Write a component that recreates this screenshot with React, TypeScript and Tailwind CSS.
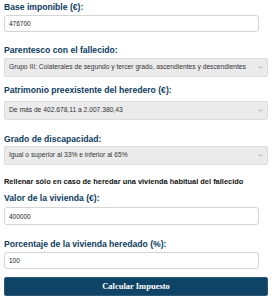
import { ChevronDown } from 'lucide-react';

const labelCls = 'block text-[8.6px] leading-[11px] font-bold text-[#0d3b5e]';
const inputCls =
  'block w-[255px] h-[17px] px-[4px] bg-white border border-[#d4d4d4] rounded-[3px] text-[6.5px] text-[#222] outline-none';

function Select({ value, options }: { value: string; options: string[] }) {
  return (
    <div className="relative w-[264px]">
      <select
        defaultValue={value}
        className="block w-full h-[19px] pl-[4px] pr-[14px] appearance-none bg-[#ebebeb] border border-[#dcdcdc] rounded-[2px] text-[6.7px] text-[#333] outline-none"
      >
        {options.map((o) => (
          <option key={o} value={o}>
            {o}
          </option>
        ))}
      </select>
      <ChevronDown className="absolute right-[5px] top-[7px] w-[5px] h-[5px] text-[#777] pointer-events-none" strokeWidth={3} />
    </div>
  );
}

export default function App() {
  return (
    <div className="w-[272px] h-[302px] bg-white px-[4px] pt-[2px] font-['Liberation_Sans',Arial,sans-serif] overflow-hidden">
      <label className={labelCls}>Base imponible (€):</label>
      <input className={`${inputCls} mt-[2px]`} defaultValue="476700" />

      <label className={`${labelCls} mt-[13px]`}>Parentesco con el fallecido:</label>
      <div className="mt-[2px]">
        <Select
          value="Grupo III: Colaterales de segundo y tercer grado, ascendientes y descendientes"
          options={['Grupo III: Colaterales de segundo y tercer grado, ascendientes y descendientes']}
        />
      </div>

      <label className={`${labelCls} mt-[8px]`}>Patrimonio preexistente del heredero (€):</label>
      <div className="mt-[5px]">
        <Select value="De más de 402.678,11 a 2.007.380,43" options={['De más de 402.678,11 a 2.007.380,43']} />
      </div>

      <label className={`${labelCls} mt-[14px]`}>Grado de discapacidad:</label>
      <div className="mt-[1px]">
        <Select
          value="Igual o superior al 33% e inferior al 65%"
          options={['Igual o superior al 33% e inferior al 65%']}
        />
      </div>

      <p className="mt-[12px] text-[7.45px] leading-[10px] font-bold text-[#111] whitespace-nowrap">
        Rellenar sólo en caso de heredar una vivienda habitual del fallecido
      </p>

      <label className={`${labelCls} mt-[6px]`}>Valor de la vivienda (€):</label>
      <input className={`${inputCls} mt-[3px] h-[18px]`} defaultValue="400000" />

      <label className={`${labelCls} mt-[14px]`}>Porcentaje de la vivienda heredado (%):</label>
      <input className={`${inputCls} mt-[2px]`} defaultValue="100" />

      <button className="block mt-[8px] w-[264px] h-[19px] bg-[#0f4466] border border-[#2a5a7a] rounded-[2px] text-white text-[8.5px] font-bold font-['Liberation_Serif',serif]">
        Calcular Impuesto
      </button>
    </div>
  );
}
